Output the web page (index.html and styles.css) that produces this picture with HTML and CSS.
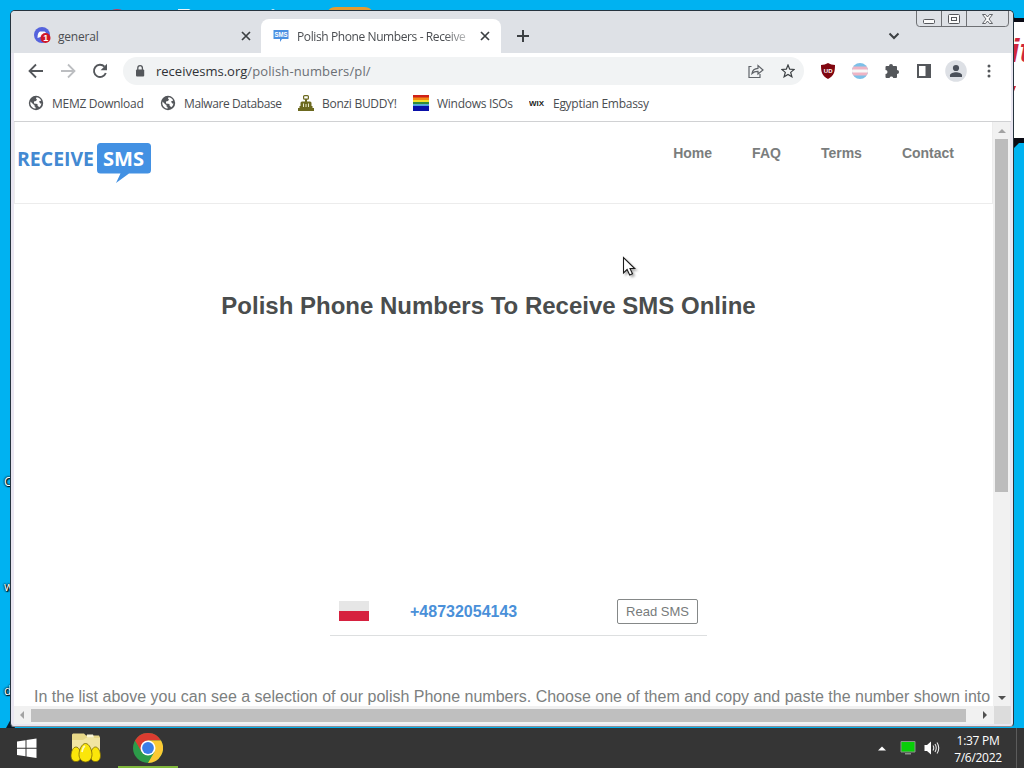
FILE: index.html
```html
<!DOCTYPE html>
<html lang="en">

<head>
    <meta charset="UTF-8">
    <meta name="viewport" content="width=device-width, initial-scale=1.0">
    <title>Polish Phone Numbers - Receive SMS</title>
    <link rel="stylesheet" href="styles.css">
</head>

<body>

    <div class="desktop">
        <!-- wallpaper and icons behind the window -->
        <svg class="wallpaper" width="1024" height="728" viewBox="0 0 1024 728">
            <path d="M110 11q7-4 14 0z" fill="#c8385a" />
            <path d="M178 11v-2h11l3 2zM269 11l4-2 4 2z" fill="#eef6fa" />
            <path d="M328 11q2-4 8-4h28q6 0 8 4z" fill="#e39b31" />
            <path d="M1010 15l5 3h9v125h-5l-5 5h-4z" fill="#0a0a14" />
            <rect x="1010" y="22" width="14" height="116" fill="#fff" />
            <path d="M1013 86h3l-3 8z" fill="#d0263c" />
            <path d="M11 719l-5 9h9z" fill="#0a1a2a" />
        </svg>
        <span class="wall-text">it</span>
        <span class="icon-text icon-text-1">C</span>
        <span class="icon-text icon-text-2">w</span>
        <span class="icon-text icon-text-3">d</span>

        <div class="window">
            <div class="tabs">
                <div class="tab">
                    <svg class="tab-icon" width="18" height="18" viewBox="0 0 18 18">
                        <circle cx="8" cy="8" r="8" fill="#5563dd" />
                        <path d="M3.500 11c0-4 1-6 2.500-6.500h4.500c1.500.5 2.500 2.500 2.500 6.500l-3-1H6.500z" fill="#fff" />
                        <circle cx="11.500" cy="11" r="5" fill="#d01828" />
                        <text x="9.200" y="14.300" class="badge-text">1</text>
                    </svg>
                    <span class="tab-title general">general</span>
                    <svg class="tab-close" width="10" height="10" viewBox="0 0 10 10">
                        <path d="M1 1l8 8M9 1L1 9" />
                    </svg>
                </div>
                <div class="tab active">
                    <svg class="tab-icon" width="16" height="14" viewBox="0 0 16 14">
                        <path d="M.5 1h15v9H9l-2 3V10H.5z" fill="#4a90e2" />
                        <text x="1.500" y="8.200" class="favicon-text" textLength="13" lengthAdjust="spacingAndGlyphs">SMS</text>
                    </svg>
                    <span class="tab-title fade">Polish Phone Numbers - Receive</span>
                    <svg class="tab-close" width="10" height="10" viewBox="0 0 10 10">
                        <path d="M1 1l8 8M9 1L1 9" />
                    </svg>
                </div>
                <svg class="new-tab" width="12" height="12" viewBox="0 0 12 12">
                    <path d="M6 0v12M0 6h12" />
                </svg>
                <svg class="tab-search" width="12" height="8" viewBox="0 0 12 8">
                    <path d="M1.500 1.500L6 6l4.500-4.500" />
                </svg>
            </div>

            <div class="window-buttons">
                <svg width="93" height="16" viewBox="0 0 93 16">
                    <path d="M.5 0v12q0 3.500 3 3.500h86q3 0 3-3.500V0M25.500 0v15M50.500 0v15" fill="none" stroke="#6e7074" />
                    <g fill="#fbfbfb" stroke="#55575c">
                        <rect x="7.500" y="8.500" width="11" height="4" rx="1" />
                        <rect x="32.500" y="3.500" width="11" height="9" rx="1" />
                        <rect x="35.500" y="6.500" width="5" height="3" />
                        <path d="M66.500 3.500h3l2 2.500 2-2.500h3L73 8l3.500 4.500h-3l-2-2.500-2 2.500h-3L70 8z" stroke-width=".9" />
                    </g>
                </svg>
            </div>

            <div class="toolbar">
                <svg class="nav-icon" width="16" height="16" viewBox="0 0 16 16">
                    <path d="M15 8H2M8 1.500L1.500 8 8 14.500" fill="none" stroke="#54575b" stroke-width="1.800" />
                </svg>
                <svg class="nav-icon" width="16" height="16" viewBox="0 0 16 16">
                    <path d="M1 8h13M8 1.500L14.500 8 8 14.500" fill="none" stroke="#bcbec1" stroke-width="1.800" />
                </svg>
                <svg class="nav-icon" width="16" height="16" viewBox="0 0 16 16">
                    <path d="M13.800 10A6.100 6.100 0 1 1 12.500 3.700" fill="none" stroke="#54575b" stroke-width="1.900" />
                    <path d="M15 .8v6.400H8.600z" fill="#54575b" />
                </svg>
                <div class="address">
                    <svg class="lock" width="10" height="12" viewBox="0 0 10 12">
                        <rect x="1" y="4.500" width="8.200" height="7" rx="1" fill="#54575b" />
                        <path d="M2.800 5V3a2.300 2.300 0 0 1 4.600 0v2" fill="none" stroke="#54575b" stroke-width="1.300" />
                    </svg>
                    <p class="url"><span class="host">receivesms.org</span>/polish-numbers/pl/</p>
                    <svg class="share" width="16" height="14" viewBox="0 0 16 14">
                        <path d="M3.500 2.500H1v11h11V10" />
                        <path d="M4 9.500c.5-3.500 2.500-5 6-5.200V1.500L15 6l-5 4V7.300C7.500 7.200 5.500 8 4 9.500z" />
                    </svg>
                    <svg class="star" width="14" height="14" viewBox="0 0 14 14">
                        <path d="M7 1l1.700 4.200 4.500.3-3.500 2.900 1.200 4.400L7 10.400l-3.900 2.400 1.200-4.400L.8 5.500l4.500-.3z" />
                    </svg>
                </div>
                <svg class="extension" width="16" height="16" viewBox="0 0 16 16">
                    <path d="M8 0c2 1.300 4.500 2 7 2 0 7-1 11-7 14C2 13 1 9 1 2c2.500 0 5-.7 7-2z" fill="#800610" />
                    <text x="3.800" y="9.600" class="shield-text">UD</text>
                </svg>
                <svg class="extension" width="16" height="16" viewBox="0 0 16 16">
                    <clipPath id="round"><circle cx="8" cy="8" r="8" /></clipPath>
                    <g clip-path="url(#round)">
                        <path d="M0 0h16v16H0z" fill="#7cc0e8" />
                        <path d="M0 3.500h16v9H0z" fill="#eeb4c4" />
                        <path d="M0 6.500h16v3H0z" fill="#f8f8f8" />
                    </g>
                </svg>
                <svg class="extension" width="16" height="16" viewBox="0 0 16 16">
                    <path d="M1.500 4q0-1 1-1H5a2 2 0 0 1 4 0h3q1 0 1 1v3a2 2 0 0 1 0 4.100V14q0 1-1 1H9.300a2 2 0 0 0-3.800 0h-3q-1 0-1-1v-3a2 2 0 0 0 0-4z" fill="#54575b" />
                </svg>
                <svg class="extension" width="16" height="16" viewBox="0 0 16 16">
                    <path d="M1 1h14v14H1zM3 3v10h6.500V3z" fill="#54575b" fill-rule="evenodd" />
                </svg>
                <svg class="profile" width="22" height="22" viewBox="0 0 22 22">
                    <circle cx="11" cy="11" r="10.800" fill="#dde0e5" />
                    <circle cx="11" cy="8" r="3.100" fill="#4b515b" />
                    <path d="M5 17v-1.800c0-2 3.500-3 6-3s6 1 6 3V17z" fill="#4b515b" />
                </svg>
                <svg class="menu" width="4" height="14" viewBox="0 0 4 14">
                    <g fill="#54575b">
                        <circle cx="2" cy="2" r="1.500" />
                        <circle cx="2" cy="7" r="1.500" />
                        <circle cx="2" cy="12" r="1.500" />
                    </g>
                </svg>
            </div>

            <div class="bookmarks">
                <div class="bookmark memz">
                    <svg width="16" height="16" viewBox="0 0 16 16">
                        <circle cx="8" cy="8" r="7.200" fill="#54575b" />
                        <path d="M2.500 6.500l3 3 1 .5v1.500l1 .5v1.800A5.700 5.700 0 0 1 2.500 6.500zM8.500 2.300c2 0 4 1.500 4.700 3.200L11 6.500l1.200 2h1.300a5.800 5.800 0 0 1-2.300 3.700L9.500 10.500V9L6 8.500v-2l2-.5 1-1.500-1-.8z" fill="#fff" />
                    </svg>
                    <span>MEMZ Download</span>
                </div>
                <div class="bookmark malware">
                    <svg width="16" height="16" viewBox="0 0 16 16">
                        <circle cx="8" cy="8" r="7.200" fill="#54575b" />
                        <path d="M2.500 6.500l3 3 1 .5v1.500l1 .5v1.800A5.700 5.700 0 0 1 2.500 6.500zM8.500 2.300c2 0 4 1.500 4.700 3.200L11 6.500l1.200 2h1.300a5.800 5.800 0 0 1-2.300 3.700L9.500 10.500V9L6 8.500v-2l2-.5 1-1.500-1-.8z" fill="#fff" />
                    </svg>
                    <span>Malware Database</span>
                </div>
                <div class="bookmark bonzi">
                    <svg width="16" height="16" viewBox="0 0 16 16">
                        <path d="M0 13h1.500V11h1V8q0-1.500 1.500-1.500h8q1.500 0 1.500 1.500v3h1v2H16v3H0z" fill="#6c691f" />
                        <rect x="5.600" y=".6" width="4.800" height="3.600" rx="1" fill="#fff" stroke="#6c691f" stroke-width="1.200" />
                        <path d="M7 4h2v3H7z" fill="#6c691f" />
                        <path d="M5.500 8.500V12M10.500 8.500V12M8 9v3" stroke="#e9e9c9" />
                    </svg>
                    <span>Bonzi BUDDY!</span>
                </div>
                <div class="bookmark windows">
                    <svg width="16" height="16" viewBox="0 0 16 16">
                        <path d="M0 0h16v3H0z" fill="#cf2118" />
                        <path d="M0 2.500h16v2.500H0z" fill="#f28a14" />
                        <path d="M0 5h16v2H0z" fill="#f4e12a" />
                        <path d="M0 7h16v2.500H0z" fill="#2f8d3c" />
                        <path d="M0 9.200h16v2H0z" fill="#4aa3e0" />
                        <path d="M0 11h16v5H0z" fill="#0a10a8" />
                    </svg>
                    <span>Windows ISOs</span>
                </div>
                <div class="bookmark egypt">
                    <svg width="16" height="16" viewBox="0 0 16 16">
                        <text x="0" y="10.500" class="wix-text" textLength="15" lengthAdjust="spacingAndGlyphs">WIX</text>
                    </svg>
                    <span>Egyptian Embassy</span>
                </div>
            </div>

            <div class="view">
                <div class="page">
                    <div class="header">
                        <svg class="logo" width="136" height="42" viewBox="0 0 136 42">
                            <text x="0" y="23.500" class="logo-receive" textLength="77" lengthAdjust="spacingAndGlyphs">RECEIVE</text>
                            <path d="M83.500 1h47q3.500 0 3.500 3.500v23.500q0 3.500-3.500 3.500H112L99 41l4.500-9.500h-20q-3.500 0-3.500-3.500V4.500Q80 1 83.500 1z" fill="#4391e3" />
                            <text x="86" y="23.500" class="logo-sms" textLength="41" lengthAdjust="spacingAndGlyphs">SMS</text>
                        </svg>
                        <div class="nav">
                            <a>Home</a>
                            <a>FAQ</a>
                            <a>Terms</a>
                            <a>Contact</a>
                        </div>
                    </div>
                    <h1 class="title">Polish Phone Numbers To Receive SMS Online</h1>
                    <div class="number-row">
                        <div class="flag"></div>
                        <a class="number">+48732054143</a>
                        <button class="read">Read SMS</button>
                    </div>
                    <p class="description">In the list above you can see a selection of our polish Phone numbers. Choose one of them and copy and paste the number shown into</p>
                </div>
                <div class="scroll-y">
                    <div class="arrow-up"></div>
                    <div class="thumb-y"></div>
                    <div class="arrow-down"></div>
                </div>
            </div>
            <div class="scroll-x">
                <div class="arrow-left"></div>
                <div class="thumb-x"></div>
                <div class="arrow-right"></div>
                <div class="corner"></div>
            </div>
        </div>

        <svg class="cursor" width="15" height="21" viewBox="0 0 15 21">
            <path d="M1.500 1.500v15.500l3.600-3.500 2.600 5.500 2.800-1.200L8 12.500h4.700z" fill="#fff" stroke="#1c1c1c" stroke-width="1.100" />
        </svg>
    </div>

    <div class="taskbar">
        <svg class="start" width="20" height="21" viewBox="0 0 20 21">
            <path d="M0 3.500l8.500-1.300v7.500H0zM9.500 2L19.500.5v9.200h-10zM0 10.700h8.500v7.500L0 17zM9.500 10.700h10v9.300l-10-1.600z" fill="#fff" />
        </svg>
        <svg class="explorer" width="32" height="32" viewBox="0 0 32 32">
            <path d="M2 2.500l1-1h11l2 2h13l1 2V20H2z" fill="#e8d888" />
            <path d="M2 8h11l3-2h14v17H2z" fill="#f1e5a3" />
            <path d="M17 2.500h6l1 3h-7z" fill="#faf5d5" />
            <g fill="#fbe60a" stroke="#77660a" stroke-width=".8">
                <path d="M6 15c3 0 5 5 5 8.500 0 4-2 6-5 6s-5-2-5-6C1 20 3 15 6 15z" />
                <path d="M25.500 15c3 0 5 5 5 8.500 0 4-2 6-5 6s-5-2-5-6c0-3.500 2-8.500 5-8.500z" />
                <path d="M15.500 11.500c4 0 6.500 7 6.500 11 0 4.500-3 7.500-6.500 7.500S9 27 9 22.500c0-4 2.500-11 6.500-11z" />
            </g>
            <path d="M12 20q1-5 3-6" fill="none" stroke="#fdfbc0" stroke-width="1.800" />
        </svg>
        <div class="task-chrome">
            <svg width="30" height="30" viewBox="0 0 30 30">
                <circle cx="15" cy="15" r="15" fill="#2c9b49" />
                <path d="M2 7.500A15 15 0 0 1 28 7.500H15L8.500 18.800z" fill="#dc3c30" />
                <path d="M28 7.500A15 15 0 0 1 15 30l6.500-11.300L15 7.500z" fill="#fcc934" />
                <circle cx="15" cy="15" r="7.500" fill="#fff" />
                <circle cx="15" cy="15" r="5.900" fill="#3b7de8" />
            </svg>
        </div>
        <div class="tray">
            <svg class="tray-up" width="8" height="5" viewBox="0 0 8 5">
                <path d="M0 4.500L4 .5l4 4z" fill="#fff" />
            </svg>
            <svg class="tray-monitor" width="16" height="14" viewBox="0 0 16 14">
                <path d="M1 .5h14v10.500H1z" fill="#08cf08" stroke="#8a938a" />
                <path d="M5 12h6v1.500H5z" fill="#8a938a" />
            </svg>
            <svg class="tray-sound" width="16" height="14" viewBox="0 0 16 14">
                <path d="M.5 4H3L7 .5v13L3 10H.5z" fill="#fff" />
                <path d="M9 4.500q1.500 2.500 0 5M11 3q2.500 4 0 8M13 1.500q3.500 5.500 0 11" fill="none" stroke="#e8e8e8" stroke-width="1.100" />
            </svg>
            <div class="clock">
                <p>1:37 PM</p>
                <p class="date">7/6/2022</p>
            </div>
            <div class="show-desktop"></div>
        </div>
    </div>

</body>

</html>
```
FILE: styles.css
```css
* {
    margin: 0;
    padding: 0;
    box-sizing: border-box;
}

body {
    width: 1024px;
    height: 768px;
    overflow: hidden;
    font-family: "Open Sans", sans-serif;
    font-size: 12px;
    color: #4a4d51;
}

svg {
    display: block;
    flex: none;
}

.desktop {
    position: relative;
    height: 728px;
    overflow: hidden;
    background-color: #00b2f1;
}

.wallpaper {
    position: absolute;
}

.wall-text {
    position: absolute;
    left: 1010px;
    top: 31px;
    font: italic bold 34px "Liberation Sans", sans-serif;
    color: #d0263c;
}

.icon-text {
    position: absolute;
    left: 4px;
    color: white;
    text-shadow: 1px 1px 1px #000, 0 0 2px #000, 0 0 2px #000;
}

.icon-text-1 {
    top: 473px;
}

.icon-text-2 {
    top: 578px;
}

.icon-text-3 {
    top: 682px;
}

.window {
    position: absolute;
    left: 10px;
    top: 10px;
    width: 1004px;
    height: 717px;
    padding: 1px 2px 2px 3px;
    border: 1px solid #26343f;
    border-bottom-color: #8a8d92;
    border-radius: 5px 5px 4px 4px;
    background-color: #e9e6f1;
    overflow: hidden;
}

/* tabs */

.tabs {
    display: flex;
    align-items: flex-end;
    height: 42px;
    margin: -1px -2px 0 -3px;
    padding-left: 3px;
    background-color: #dee1e6;
}

.tab {
    display: flex;
    align-items: center;
    width: 247px;
    height: 34px;
    padding: 0 10px 0 20px;
}

.active {
    width: 240px;
    padding: 0 11px 0 12px;
    border-radius: 8px 8px 0 0;
    background-color: white;
}

.tab-title {
    flex: 1;
    margin-left: 8px;
    white-space: nowrap;
}

.general {
    margin-left: 6px;
    letter-spacing: -0.2px;
}

.fade {
    letter-spacing: -0.4px;
    margin-right: 12px;
    -webkit-mask-image: linear-gradient(to right, #000 86%, rgba(0, 0, 0, 0.3));
    mask-image: linear-gradient(to right, #000 86%, rgba(0, 0, 0, 0.3));
}

.tab-close,
.new-tab,
.tab-search {
    fill: none;
    stroke: #3c4043;
    stroke-width: 1.7;
}

.new-tab {
    margin: 0 0 11px 16px;
    stroke-width: 2;
}

.tab-search {
    margin: 0 0 13px 359px;
    stroke-width: 2;
}

.badge-text {
    font: bold 9px "Liberation Sans", sans-serif;
    fill: white;
}

.favicon-text {
    font: bold 7px "Liberation Sans", sans-serif;
    fill: white;
}

.window-buttons {
    position: absolute;
    left: 905px;
    top: 0;
}

/* toolbar */

.toolbar {
    display: flex;
    align-items: center;
    height: 36px;
    padding-left: 14px;
    background-color: white;
}

.nav-icon {
    margin-right: 16px;
}

.address {
    display: flex;
    align-items: center;
    width: 681px;
    height: 28px;
    margin-right: 16px;
    margin-left: -1px;
    padding-left: 12px;
    border-radius: 14px;
    background-color: #f1f3f4;
}

.url {
    width: 592px;
    margin-left: 11px;
    font-size: 13px;
    letter-spacing: 0.13px;
    color: #6b6f74;
    white-space: nowrap;
}

.host {
    letter-spacing: 0;
    color: #303236;
}

.share,
.star {
    fill: none;
    stroke: #5f6368;
    stroke-width: 1.2;
}

.star {
    margin-left: 17px;
    stroke: #3c4043;
}

.extension {
    margin-right: 16px;
}

.profile {
    margin-left: -3px;
}

.menu {
    margin-left: 20px;
}

.shield-text {
    font: bold 6px "Liberation Sans", sans-serif;
    fill: white;
}

/* bookmarks */

.bookmarks {
    display: flex;
    align-items: center;
    height: 33px;
    padding: 0 0 4px 14px;
    border-bottom: 1px solid #d0d1d3;
    background-color: white;
}

.bookmark {
    display: flex;
    align-items: center;
    gap: 8px;
    letter-spacing: -0.28px;
    white-space: nowrap;
}

.memz {
    width: 132px;
}

.malware {
    width: 138px;
    letter-spacing: -0.4px;
}

.bonzi {
    width: 115px;
}

.windows {
    width: 116px;
}

.wix-text {
    font: bold 8px "Liberation Sans", sans-serif;
    letter-spacing: 0;
    fill: #222;
}

/* web page */

.view {
    display: flex;
    height: 584px;
}

.page {
    width: 979px;
    background-color: white;
    font-family: "Liberation Sans", sans-serif;
    overflow: hidden;
}

.header {
    display: flex;
    justify-content: space-between;
    height: 82px;
    padding: 20px 38px 0 2px;
    border: 1px solid #ececec;
    border-top: none;
}

.nav {
    display: flex;
    gap: 40px;
    margin-top: 3px;
    font-size: 14px;
    font-weight: bold;
    color: #7a7d7d;
}

.logo-receive {
    font: bold 20px "Open Sans", sans-serif;
    fill: #4389d2;
}

.logo-sms {
    font: bold 20px "Open Sans", sans-serif;
    fill: white;
}

.title {
    margin-top: 88px;
    font-size: 24px;
    line-height: 28px;
    text-align: center;
    color: #4a4d4d;
    margin-right: 30px;
}

.number-row {
    display: flex;
    align-items: center;
    width: 377px;
    height: 49px;
    margin: 267px 0 0 316px;
    padding: 0 9px;
    border-bottom: 1px solid #dddfe0;
}

.flag {
    width: 30px;
    height: 20px;
    background: linear-gradient(#e6e6e6 50%, #d6213f 50%);
}

.number {
    width: 207px;
    margin-left: 41px;
    padding-top: 1px;
    font-size: 16px;
    font-weight: bold;
    color: #4a90d9;
}

.read {
    width: 81px;
    height: 25px;
    border: 1px solid #858888;
    border-radius: 2px;
    background-color: white;
    font: 13px "Liberation Sans", sans-serif;
    color: #777b7b;
}

.description {
    margin: 52px 0 0 20px;
    font-size: 16px;
    color: #7c8080;
    white-space: nowrap;
}

/* scrollbars */

.scroll-y {
    display: flex;
    flex-direction: column;
    align-items: center;
    width: 17px;
    padding: 7px 0 6px;
    background-color: #f1f1f1;
}

.thumb-y {
    width: 13px;
    height: 353px;
    margin-top: 6px;
    background-color: #bcbcbc;
}

.arrow-up {
    border: 4px solid transparent;
    border-top: none;
    border-bottom-color: #a3a3a3;
}

.arrow-down {
    margin-top: auto;
    border: 4px solid transparent;
    border-bottom: none;
    border-top-color: #505050;
}

.scroll-x {
    display: flex;
    align-items: center;
    height: 18px;
    padding-left: 6px;
    background-color: #f1f1f1;
}

.arrow-left {
    border: 4px solid transparent;
    border-left: none;
    border-right-color: #a3a3a3;
}

.thumb-x {
    width: 935px;
    height: 13px;
    margin-left: 7px;
    background-color: #bfbfbf;
}

.arrow-right {
    margin-left: 17px;
    border: 4px solid transparent;
    border-right: none;
    border-left-color: #505050;
}

.corner {
    width: 17px;
    height: 18px;
    margin-left: auto;
    background-color: #dcdcdc;
}

.cursor {
    position: absolute;
    left: 622px;
    top: 256px;
    filter: drop-shadow(2px 2px 1px rgba(0, 0, 0, 0.3));
}

/* taskbar */

.taskbar {
    display: flex;
    align-items: center;
    height: 40px;
    padding-left: 17px;
    background-color: #353535;
    color: white;
}

.explorer {
    margin-left: 33px;
}

.task-chrome {
    display: flex;
    justify-content: center;
    width: 60px;
    height: 40px;
    margin-left: 16px;
    padding-top: 5px;
    border-bottom: 2px solid #80b83c;
}

.tray {
    display: flex;
    align-items: center;
    height: 40px;
    margin-left: auto;
}

.tray-monitor {
    margin-left: 14px;
}

.tray-sound {
    margin-left: 8px;
}

.clock {
    width: 68px;
    margin: 1px 4px 0 4px;
    line-height: 17px;
    text-align: center;
    letter-spacing: -0.3px;
    white-space: nowrap;
}

.show-desktop {
    width: 8px;
    height: 40px;
    border-left: 1px solid #5c5c5c;
}
```
